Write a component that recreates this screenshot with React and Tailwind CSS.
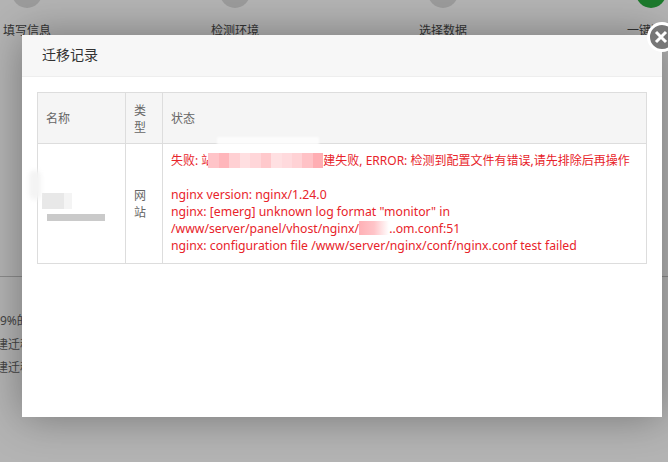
const font = "font-['Noto_Sans','Noto_Sans_CJK_SC',sans-serif]";

const pinks = [
  'bg-[#ffc4c8]', 'bg-[#ffb6bb]', 'bg-[#ffd0d3]', 'bg-[#ffdfe1]', 'bg-[#ffd6d9]', 'bg-[#ffc9cc]',
  'bg-[#ffe0e2]', 'bg-[#ffdadd]', 'bg-[#ffd2d5]', 'bg-[#ffc2c6]', 'bg-[#ffaeb3]',
];

function Step({ label, dot }) {
  return (
    <div className="w-[48px] shrink-0 flex flex-col items-center">
      <div className={`w-[30px] h-[30px] rounded-full ${dot}`}></div>
      <div className="mt-[14px] text-[12px] leading-[18px] text-[#333] whitespace-nowrap">{label}</div>
    </div>
  );
}

export default function App() {
  return (
    <div className={`relative w-[668px] h-[462px] overflow-hidden bg-[#b4b4b4] ${font}`}>
      {/* page behind the overlay */}
      <div className="flex gap-[160px] pl-[3px] -mt-[22px]">
        <Step label="填写信息" dot="bg-[#9c9c9c]" />
        <Step label="检测环境" dot="bg-[#9c9c9c]" />
        <Step label="选择数据" dot="bg-[#9c9c9c]" />
        <Step label="一键迁移" dot="bg-[#1c7a2c]" />
      </div>
      <div className="mt-[236px] border-t border-[#8c8c8c]"></div>
      <div className="mt-[32px] whitespace-nowrap text-[12px] leading-[23.5px] text-[#444]">
        <div>9%的</div>
        <div className="-ml-[4px]">建迁移</div>
        <div className="-ml-[4px]">建迁移</div>
      </div>

      {/* dialog */}
      <div className="absolute left-[22px] top-[35px] w-[640px] h-[382px] bg-white shadow-[0_0_40px_rgba(0,0,0,0.35)]">
        <div className="h-[42px] bg-[#f7f7f7] border-b border-[#eeeeee] pl-[20px] pb-[2px] flex items-center text-[14px] text-[#333]">
          迁移记录
        </div>
        <div className="relative px-[15px] pt-[15px]">
          <table className="w-[610px] table-fixed border-collapse text-[12px] text-[#666]">
            <colgroup>
              <col className="w-[88px]" />
              <col className="w-[37px]" />
              <col />
            </colgroup>
            <thead>
              <tr className="h-[51px] bg-[#f5f5f5]">
                <th className="border border-[#dddddd] px-[8px] pt-[2px] text-left font-normal">名称</th>
                <th className="border border-[#dddddd] px-[8px] pt-[2px] text-left font-normal leading-[17px]">类型</th>
                <th className="border border-[#dddddd] px-[8px] pt-[2px] text-left font-normal">状态</th>
              </tr>
            </thead>
            <tbody>
              <tr className="h-[120px]">
                <td className="border border-[#dddddd] px-[8px]">
                  <div className="flex flex-col pt-[6px]">
                    <div className="flex h-[21px] -ml-[4px]">
                      <div className="w-[22px] h-[16px] bg-[#e8e8e8]"></div>
                      <div className="w-[8px] h-[16px] bg-[#f4f4f4]"></div>
                    </div>
                    <div className="w-[58px] h-[7px] ml-[1px] bg-[#cacaca]"></div>
                  </div>
                </td>
                <td className="border border-[#dddddd] px-[8px] leading-[17px]">网站</td>
                <td className="border border-[#dddddd] px-[8px] pt-[6px] pb-[8px] leading-[17px] text-[#e8232a]">
                  <div className="h-[17px] whitespace-nowrap">
                    失败: 站
                    <span className="inline-flex align-middle w-[115px] h-[15px] -ml-[5px] -mt-[2px]">
                      {pinks.map((c, i) => (
                        <span key={i} className={`flex-1 ${c}`}></span>
                      ))}
                    </span>
                    建失败, ERROR: 检测到配置文件有错误,请先排除后再操作
                  </div>
                  <div className="h-[17px]"></div>
                  <div className="text-[12.25px]">nginx version: nginx/1.24.0</div>
                  <div className="text-[12.25px]">nginx: [emerg] unknown log format "monitor" in</div>
                  <div className="h-[17px] text-[12.25px] whitespace-nowrap">
                    /www/server/panel/vhost/nginx/
                    <span className="inline-block align-middle w-[30px] h-[14px] -mt-[2px] bg-gradient-to-r from-[#ffb0b5] via-[#ffc4c8] to-white"></span>
                    ..om.conf:51
                  </div>
                  <div className="text-[12.25px]">nginx: configuration file /www/server/nginx/conf/nginx.conf test failed</div>
                </td>
              </tr>
            </tbody>
          </table>

          {/* redaction smudges lying over the table */}
          <div className="absolute left-[195px] top-[60px] w-[102px] h-[9px] bg-white/70 blur-[1px]"></div>
          <div className="absolute left-[7px] top-[93px] w-[12px] h-[30px] rounded-full bg-[#f4f4f4] blur-[2px]"></div>
        </div>

        {/* close button */}
        <div className="absolute -right-[15px] -top-[13px] w-[30px] h-[30px] rounded-full bg-[#777] border-[3px] border-white flex items-center justify-center">
          <svg width="14" height="14" viewBox="0 0 14 14" className="-ml-[3px]">
            <path d="M2 2 L12 12 M12 2 L2 12" stroke="#fff" strokeWidth="3" />
          </svg>
        </div>
      </div>
    </div>
  );
}
